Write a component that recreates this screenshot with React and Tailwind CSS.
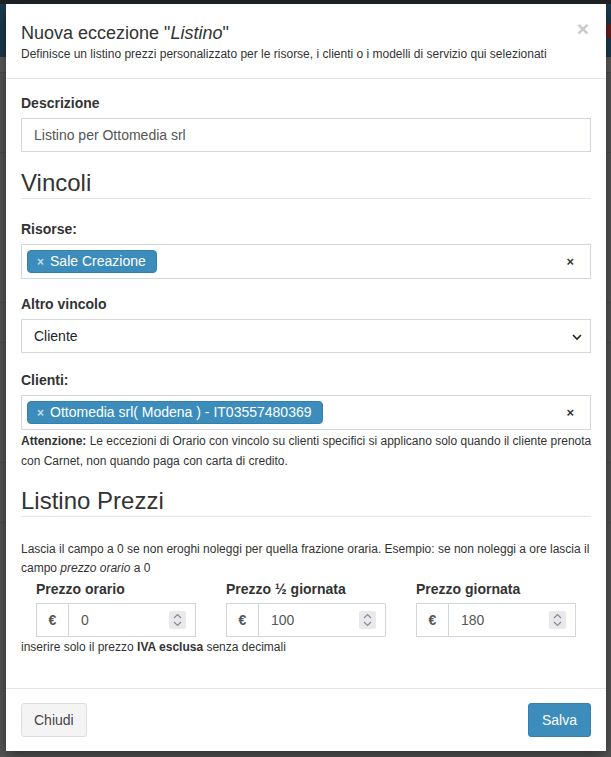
import React from "react";

function Spinner() {
  return (
    <div className="flex h-[18px] w-[17px] flex-col items-center justify-center gap-[2px] rounded-[2px] bg-[#e9e9ed]">
      <svg width="9" height="6" viewBox="0 0 9 6" fill="none">
        <path d="M1 5 L4.5 1.5 L8 5" stroke="#8a8a8a" strokeWidth="1.2" />
      </svg>
      <svg width="9" height="6" viewBox="0 0 9 6" fill="none">
        <path d="M1 1 L4.5 4.5 L8 1" stroke="#8a8a8a" strokeWidth="1.2" />
      </svg>
    </div>
  );
}

function PriceField({ label, value }) {
  return (
    <div className="flex flex-col px-[15px]">
      <div className="text-[14px] font-bold leading-[18px] text-[#333]">{label}</div>
      <div className="mt-[5px] flex h-[34px] border border-[#d2d6de]">
        <div className="flex w-[32px] items-center justify-center border-r border-[#d2d6de] text-[14px] font-bold text-[#555]">
          €
        </div>
        <div className="flex flex-1 items-center justify-between pl-[12px] pr-[9px] text-[14px] text-[#555]">
          <span>{value}</span>
          <Spinner />
        </div>
      </div>
    </div>
  );
}

function Tag({ children }) {
  return (
    <div className="flex h-[23px] items-center rounded-[4px] border border-[#367fa9] bg-[#3c8dbc] pl-[9px] pr-[10px] text-[14px] text-white">
      <span className="mr-[6px] text-[12px] font-bold text-white/70">×</span>
      <span>{children}</span>
    </div>
  );
}

function Select2Box({ children }) {
  return (
    <div className="flex h-[35px] items-center justify-between border border-[#d2d6de] pl-[5px] pr-[16px]">
      {children}
      <span className="text-[13px] font-bold text-[#333]">×</span>
    </div>
  );
}

function Label({ children, className = "" }) {
  return (
    <div className={"text-[14px] font-bold leading-[20px] text-[#333] " + className}>{children}</div>
  );
}

export default function App() {
  return (
    <div className="relative h-[757px] w-[611px] overflow-hidden bg-[#585858] font-['Liberation_Sans',Arial,sans-serif]">
      {/* dimmed page behind the modal */}
      <div className="flex flex-col">
        <div className="h-[4px] bg-[#202427]" />
        <div className="flex h-[53px] items-center justify-end bg-[#1d3c50]">
          <div className="h-[14px] w-[6px] bg-[#6a2020]" />
        </div>
        <div className="h-[16px] border-b border-[#4e4e4e] bg-[#5f5f5f]" />
        <div className="h-[80px] border-b border-[#4f4f4f]" />
        <div className="h-[150px] border-b border-[#4f4f4f]" />
        <div className="h-[40px] border-b border-[#4f4f4f]" />
        <div className="h-[120px] border-b border-[#4f4f4f]" />
        <div className="h-[60px] border-b border-[#4f4f4f]" />
      </div>

      {/* modal */}
      <div className="absolute left-[6px] top-[4px] flex w-[600px] flex-col bg-white text-[#333] shadow-[0_5px_15px_rgba(0,0,0,0.5)]">
        {/* header */}
        <div className="flex justify-between border-b border-[#e5e5e5] px-[15px] pb-[15px] pt-[15px]">
          <div className="flex flex-col">
            <div className="pt-[1px] text-[18px] leading-[26px] text-[#333]">
              Nuova eccezione "<i>Listino</i>"
            </div>
            <div className="text-[12px] leading-[17px] text-[#333]">
              Definisce un listino prezzi personalizzato per le risorse, i clienti o i modelli di servizio qui selezionati
            </div>
          </div>
          <div className="-mt-[1px] mr-[2px] text-[21px] font-bold leading-[21px] text-[#c9c9c9]">×</div>
        </div>

        {/* body */}
        <div className="flex flex-col px-[15px] pb-[31px] pt-[14px]">
          <Label>Descrizione</Label>
          <div className="mt-[5px] flex h-[34px] items-center border border-[#d2d6de] px-[12px] text-[14px] text-[#555]">
            Listino per Ottomedia srl
          </div>

          <div className="mt-[18px] border-b border-[#e5e5e5] pb-[2px] text-[24px] leading-[26px] text-[#333]">
            Vincoli
          </div>

          <Label className="mt-[20px]">Risorse:</Label>
          <div className="mt-[5px]">
            <Select2Box>
              <Tag>Sale Creazione</Tag>
            </Select2Box>
          </div>

          <Label className="mt-[15px]">Altro vincolo</Label>
          <div className="mt-[5px] flex h-[34px] items-center justify-between border border-[#d2d6de] pl-[12px] pr-[7px] text-[14px] text-[#222]">
            <span>Cliente</span>
            <svg width="12" height="12" viewBox="0 0 12 12" fill="none" className="mt-[1px]">
              <path d="M2 4 L6 8 L10 4" stroke="#222" strokeWidth="1.6" />
            </svg>
          </div>

          <Label className="mt-[17px]">Clienti:</Label>
          <div className="mt-[5px]">
            <Select2Box>
              <Tag>Ottomedia srl( Modena ) - IT03557480369</Tag>
            </Select2Box>
          </div>
          <div className="-mr-[10px] pt-[1px] text-[12px] leading-[20px] text-[#333]">
            <b>Attenzione:</b> Le eccezioni di Orario con vincolo su clienti specifici si applicano solo quando il cliente prenota con Carnet, non quando paga con carta di credito.
          </div>

          <div className="mt-[17px] border-b border-[#e5e5e5] pb-[2px] text-[24px] leading-[26px] text-[#333]">
            Listino Prezzi
          </div>

          <div className="mt-[23px] text-[12px] leading-[19px] text-[#333]">
            Lascia il campo a 0 se non eroghi noleggi per quella frazione oraria. Esempio: se non noleggi a ore lascia il campo <i>prezzo orario</i> a 0
          </div>

          <div className="mt-[2px] grid grid-cols-3">
            <PriceField label="Prezzo orario" value="0" />
            <PriceField label="Prezzo ½ giornata" value="100" />
            <PriceField label="Prezzo giornata" value="180" />
          </div>

          <div className="text-[12px] leading-[20px] text-[#333]">
            inserire solo il prezzo <b>IVA esclusa</b> senza decimali
          </div>
        </div>

        {/* footer */}
        <div className="flex items-center justify-between border-t border-[#e5e5e5] px-[15px] pb-[14px] pt-[14px]">
          <div className="flex h-[34px] items-center rounded-[3px] border border-[#ddd] bg-[#f4f4f4] px-[12px] text-[14px] text-[#444]">
            Chiudi
          </div>
          <div className="flex h-[34px] items-center rounded-[3px] border border-[#367fa9] bg-[#3c8dbc] px-[13px] text-[14px] text-white">
            Salva
          </div>
        </div>
      </div>
    </div>
  );
}
